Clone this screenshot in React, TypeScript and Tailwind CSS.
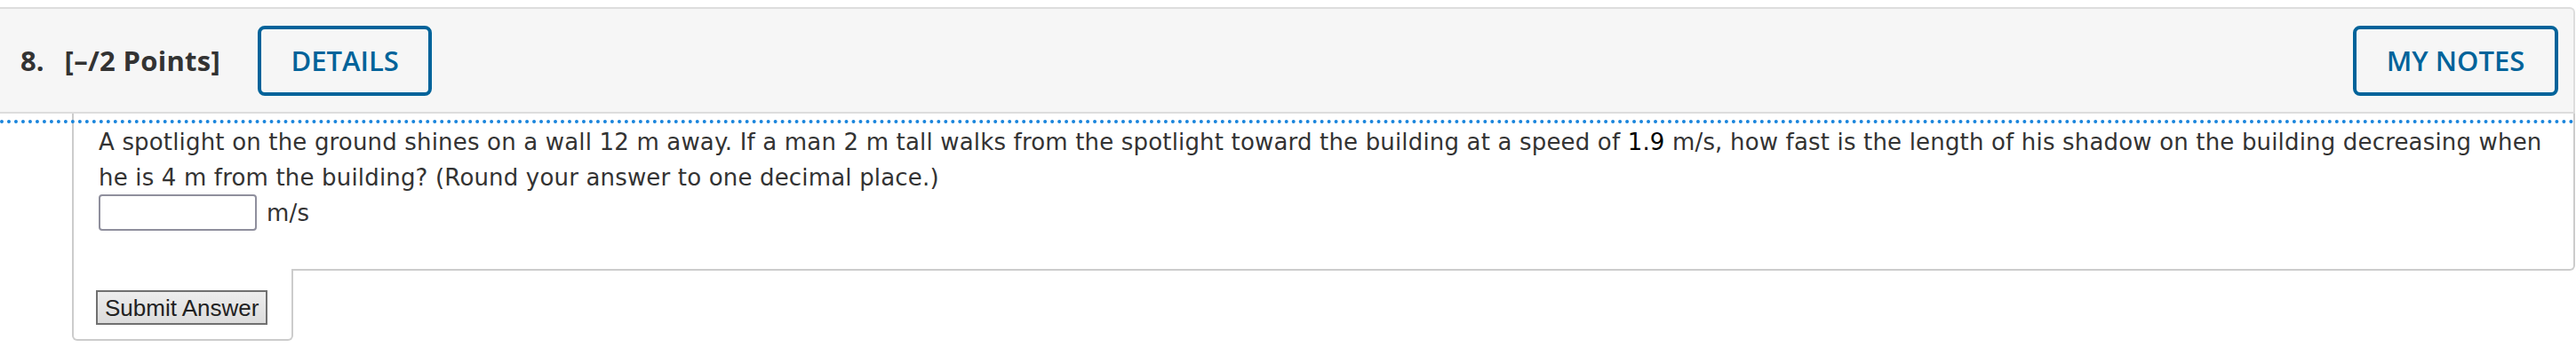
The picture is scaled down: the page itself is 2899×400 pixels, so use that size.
export default function App() {
  return (
    <div className="relative w-[2899px] h-[400px] bg-white pt-[8px] overflow-hidden">
      <div className="mr-[1px] h-[120px] flex items-center bg-[#f6f6f6] border-t-2 border-r-2 border-b-2 border-[#dddddd] rounded-tr-[6px] pl-[23px] pr-[17px] font-['Open_Sans',sans-serif]">
        <span className="font-bold text-[31px] text-[#333333]">8.</span>
        <span className="ml-[23px] font-bold text-[31px] text-[#333333] tracking-[0.3px]">[–/2 Points]</span>
        <button className="ml-[42px] h-[79px] w-[196px] border-4 border-[#00639a] rounded-[8px] text-[#00639a] font-semibold text-[31px] bg-transparent">
          DETAILS
        </button>
        <div className="flex-1" />
        <button className="h-[79px] w-[231px] border-4 border-[#00639a] rounded-[8px] text-[#00639a] font-semibold text-[31px] bg-transparent">
          MY NOTES
        </button>
      </div>

      <div className="ml-[81px] mr-[1px] border-x-2 border-b-2 border-[#cccccc] rounded-br-[6px] pl-[28px] pr-[28px] pt-[12px] pb-[43px] font-['DejaVu_Sans',sans-serif] text-[26px] tracking-[0.17px] leading-[40px] text-[#333333]">
        <p>
          A spotlight on the ground shines on a wall 12 m away. If a man 2 m tall walks from the spotlight toward the building at a speed of <span className="text-black">1.9</span> m/s, how fast is the length of his shadow on the building decreasing when he is 4 m from the building? (Round your answer to one decimal place.)
        </p>
        <div className="flex items-center h-[41px] -mt-[1px]">
          <input
            type="text"
            className="w-[178px] h-[41px] border-2 border-[#8f8f9d] rounded-[4px] bg-white outline-none"
          />
          <span className="ml-[11px]">m/s</span>
        </div>
      </div>

      <div className="relative -mt-[2px] ml-[81px] w-[249px] h-[81px] bg-white border-x-2 border-b-2 border-[#cccccc] rounded-b-[6px] pl-[25px] pt-[24px]">
        <button className="h-[39px] px-[8px] border-2 border-[#707070] bg-gradient-to-b from-[#ededed] to-[#dcdcdc] text-[26px] leading-none text-[#222222] font-['Liberation_Sans',Arial,sans-serif]">
          Submit Answer
        </button>
      </div>

      <div className="absolute left-0 top-[135px] w-full border-t-4 border-dotted border-[#1a85dc]" />
    </div>
  );
}
